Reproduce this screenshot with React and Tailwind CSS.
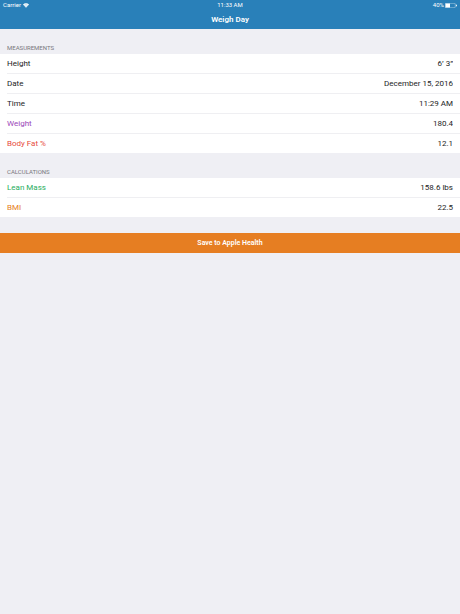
import React from 'react';

const measurements = [
  { id: 'height', label: 'Height', value: '6’ 3”', color: 'text-[#1c1c1e]' },
  { id: 'date', label: 'Date', value: 'December 15, 2016', color: 'text-[#1c1c1e]' },
  { id: 'time', label: 'Time', value: '11:29 AM', color: 'text-[#1c1c1e]' },
  { id: 'weight', label: 'Weight', value: '180.4', color: 'text-[#9b46b8]' },
  { id: 'body-fat', label: 'Body Fat %', value: '12.1', color: 'text-[#e74c3c]' },
];

const calculations = [
  { label: 'Lean Mass', value: '158.6 lbs', color: 'text-[#27ae60]' },
  { label: 'BMI', value: '22.5', color: 'text-[#e67e22]' },
];

function WifiIcon() {
  return (
    <svg viewBox="0 0 12 9" className="w-[6px] h-[5px]" aria-hidden="true">
      <path d="M6 9 0 2.6a8.4 8.4 0 0 1 12 0Z" fill="white" />
      <path d="M1.9 4.4a6 6 0 0 1 8.2 0M3.7 6.4a3.4 3.4 0 0 1 4.6 0" fill="none" stroke="#2980b9" strokeWidth=".5" />
    </svg>
  );
}

function BatteryIcon() {
  return (
    <svg viewBox="0 0 24 10" className="w-[12px] h-[5px]" aria-hidden="true">
      <rect x=".5" y=".5" width="20" height="9" rx="1.5" fill="none" stroke="white" strokeOpacity=".8" />
      <rect x="1" y="1" width="9" height="8" fill="white" />
      <path d="M22 3v4a2 2 0 0 0 0-4Z" fill="white" />
    </svg>
  );
}

function SectionTitle({ children }) {
  return (
    <h2 className="flex items-end h-[25px] px-[7px] pb-[2px] text-[6px] leading-[8px] text-[#77777c]">
      {children}
    </h2>
  );
}

// the separator is inset on the left, like a native table cell
function Row({ children }) {
  return (
    <div className="ml-[7px] pr-[7px] flex items-center justify-between leading-[19px] border-b border-[#efeff2] last:border-b-0">
      {children}
    </div>
  );
}

export default function App() {
  return (
    <div className="min-h-screen bg-[#efeff4] text-[8px] text-[#1c1c1e] font-['Roboto',sans-serif]">
      <header className="bg-[#2980b9] text-white pb-[3px]">
        <div className="grid grid-cols-3 items-center h-[10px] px-[3px] text-[6px] leading-[10px]">
          <div className="flex items-center gap-[2px]">
            <span>Carrier</span>
            <WifiIcon />
          </div>
          <span className="text-center">11:33 AM</span>
          <div className="flex items-center justify-end gap-[1px]">
            <span>40%</span>
            <BatteryIcon />
          </div>
        </div>
        <h1 className="pt-[4px] text-center font-semibold leading-[12px]">Weigh Day</h1>
      </header>

      <main>
        <section>
          <SectionTitle>MEASUREMENTS</SectionTitle>
          <div className="bg-white">
            {measurements.map((m) => (
              <Row key={m.id}>
                <label htmlFor={m.id} className={m.color}>{m.label}</label>
                <input
                  id={m.id}
                  type="text"
                  defaultValue={m.value}
                  className="flex-1 min-w-0 h-[19px] bg-transparent text-right outline-none"
                />
              </Row>
            ))}
          </div>
        </section>

        <section>
          <SectionTitle>CALCULATIONS</SectionTitle>
          <dl className="bg-white">
            {calculations.map((c) => (
              <Row key={c.label}>
                <dt className={c.color}>{c.label}</dt>
                <dd>{c.value}</dd>
              </Row>
            ))}
          </dl>
        </section>

        <button
          type="button"
          className="block w-full mt-4 pt-px bg-[#e67e22] text-white text-[7px] font-semibold leading-[19px]"
        >
          Save to Apple Health
        </button>
      </main>
    </div>
  );
}
